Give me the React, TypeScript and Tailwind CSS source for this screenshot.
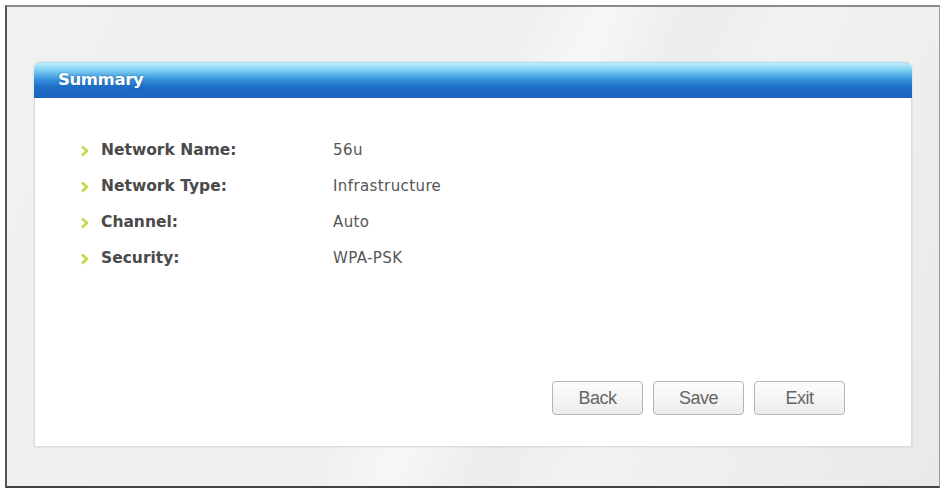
const rows = [
  { label: "Network Name:", value: "56u" },
  { label: "Network Type:", value: "Infrastructure" },
  { label: "Channel:", value: "Auto" },
  { label: "Security:", value: "WPA-PSK" },
]

function Bullet() {
  return (
    <svg width="9" height="12" viewBox="0 0 9 12" className="shrink-0">
      <path d="M2 1.5 L7 6 L2 10.5" fill="none" stroke="#c3d94a" strokeWidth="2.6" strokeLinejoin="round" />
    </svg>
  )
}

function WizardButton({ children }: { children: string }) {
  return (
    <button className="h-[34px] w-[91px] rounded-[4px] border border-[#b4b4b4] bg-[linear-gradient(#fdfdfd,#ececec)] text-[18px] tracking-[-0.5px] text-[#666] shadow-[inset_0_1px_0_#fff] [font-family:'Liberation_Sans_Narrow','Liberation_Sans',sans-serif]">
      {children}
    </button>
  )
}

export default function App() {
  return (
    <div className="h-[493px] w-[945px] bg-white p-[5px]">
      <div className="flex h-[483px] flex-col border-l-2 border-t-2 border-r border-b-2 border-l-[#555] border-t-[#8a8a8a] border-r-[#9a9a9a] border-b-[#444] bg-[linear-gradient(115deg,#f1f1f1_0%,#efefef_45%,#f7f7f7_52%,#ececec_60%,#f2f2f2_68%,#e9e9e9_100%)] px-[27px] pt-[55px]">
        <div className="flex h-[385px] flex-col rounded-t-[7px] shadow-[0_0_2px_rgba(0,0,0,0.15)]">
          <div className="flex h-[36px] items-center rounded-t-[7px] border-t border-[#a8dcf2] bg-[linear-gradient(#c2ecfb_0%,#79cdf2_22%,#3590dc_48%,#1c6cc6_70%,#1b64bd_100%)] pl-[24px]">
            <span className="text-[16.5px] font-bold tracking-[-0.4px] text-white [text-shadow:0_0_2px_rgba(0,40,100,0.5)] [font-family:'DejaVu_Sans',sans-serif]">
              Summary
            </span>
          </div>
          <div className="flex flex-1 flex-col border-x border-b border-[#dcdcdc] bg-white">
            <div className="flex flex-col gap-[17px] pl-[45px] pt-[43px]">
              {rows.map((r) => (
                <div key={r.label} className="flex h-[19px] items-center">
                  <Bullet />
                  <span className="ml-[12px] w-[232px] text-[15.5px] font-bold text-[#4a4a4a] [font-family:'DejaVu_Sans',sans-serif]">
                    {r.label}
                  </span>
                  <span className="text-[15px] tracking-[0.4px] text-[#555] [font-family:'DejaVu_Sans',sans-serif]">{r.value}</span>
                </div>
              ))}
            </div>
            <div className="mt-auto flex justify-end gap-[10px] pb-[31px] pr-[66px]">
              <WizardButton>Back</WizardButton>
              <WizardButton>Save</WizardButton>
              <WizardButton>Exit</WizardButton>
            </div>
          </div>
        </div>
      </div>
    </div>
  )
}
